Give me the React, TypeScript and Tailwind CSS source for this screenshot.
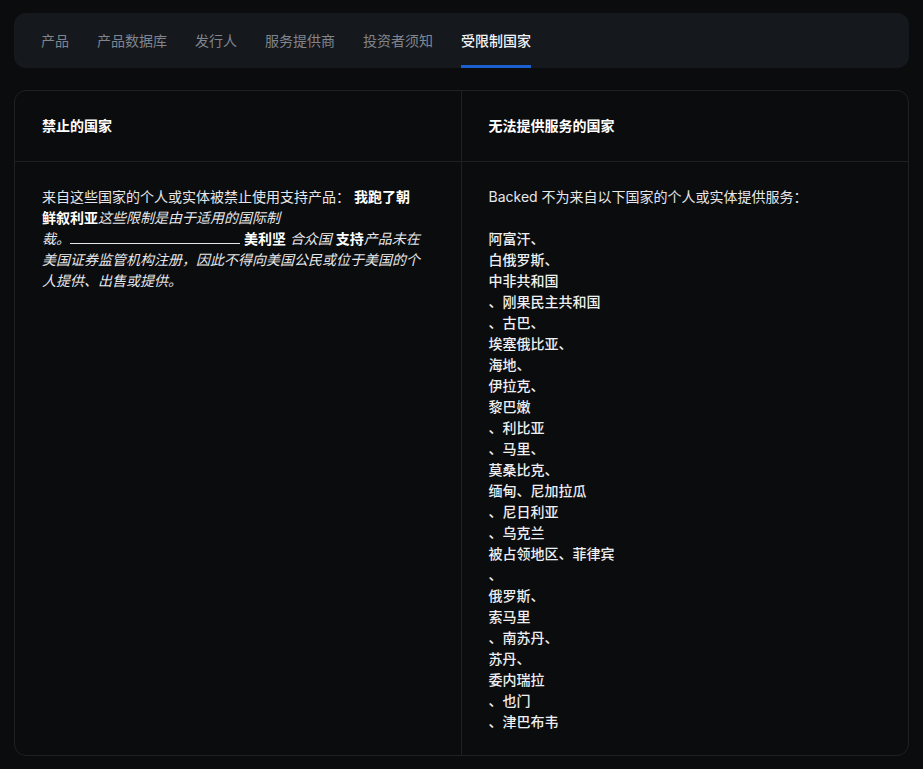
const tabs = ["产品", "产品数据库", "发行人", "服务提供商", "投资者须知", "受限制国家"];

const countries = [
  "阿富汗、",
  "白俄罗斯、",
  "中非共和国",
  "、刚果民主共和国",
  "、古巴、",
  "埃塞俄比亚、",
  "海地、",
  "伊拉克、",
  "黎巴嫩",
  "、利比亚",
  "、马里、",
  "莫桑比克、",
  "缅甸、尼加拉瓜",
  "、尼日利亚",
  "、乌克兰",
  "被占领地区、菲律宾",
  "、",
  "俄罗斯、",
  "索马里",
  "、南苏丹、",
  "苏丹、",
  "委内瑞拉",
  "、也门",
  "、津巴布韦",
];

export default function App() {
  return (
    <div
      className="min-h-screen bg-[#0b0c0e] px-[14px] pt-[13px] pb-[15px] text-[14px] text-[#e6e7ea]"
      style={{ fontFamily: 'Inter, "Noto Sans CJK SC", sans-serif' }}
    >
      {/* Tabs */}
      <div className="flex h-[55px] items-stretch gap-[28px] rounded-[12px] bg-[#15181d] px-[27px]">
        {tabs.map((t, i) => {
          const active = i === tabs.length - 1;
          return (
            <div
              key={t}
              className={
                active
                  ? "relative flex items-center font-medium text-[#f2f3f5]"
                  : "relative flex items-center text-[#80858e]"
              }
            >
              {t}
              {active && <div className="absolute bottom-0 left-0 right-0 h-[3px] bg-[#1b5fd1]" />}
            </div>
          );
        })}
      </div>

      {/* Card */}
      <div className="mt-[22px] grid grid-cols-2 rounded-[12px] border border-[#1d2025]">
        <div className="border-r border-[#1d2025]">
          <div className="flex h-[71px] items-center border-b border-[#1d2025] px-[27px] pb-[2px] font-bold text-white">
            禁止的国家
          </div>
          <div className="pl-[27px] pr-[38px] pt-[24px] pb-[23px] leading-[21px]">
            <p>
              来自这些国家的个人或实体被禁止使用支持产品：{" "}
              <strong className="font-bold text-white">我跑了朝鲜叙利亚</strong>
              <em>这些限制是由于适用的国际制</em>
              <span className="whitespace-nowrap">
                <em>裁。</em>
                <span className="inline-block w-[170px] border-b border-[#e6e7ea] align-baseline" />
              </span>{" "}
              <strong className="font-bold text-white">美利坚</strong> <em>合众国</em>{" "}
              <strong className="font-bold text-white">支持</strong>
              <em>产品未在美国证券监管机构注册，因此不得向美国公民或位于美国的个人提供、出售或提供。</em>
            </p>
          </div>
        </div>
        <div>
          <div className="flex h-[71px] items-center border-b border-[#1d2025] px-[27px] pb-[2px] font-bold text-white">
            无法提供服务的国家
          </div>
          <div className="px-[27px] pt-[24px] pb-[23px] leading-[21px]">
            <p>Backed 不为来自以下国家的个人或实体提供服务：</p>
            <div className="mt-[21px] font-medium text-[#eeeff1]">
              {countries.map((c, i) => (
                <div key={i}>{c}</div>
              ))}
            </div>
          </div>
        </div>
      </div>
    </div>
  );
}
